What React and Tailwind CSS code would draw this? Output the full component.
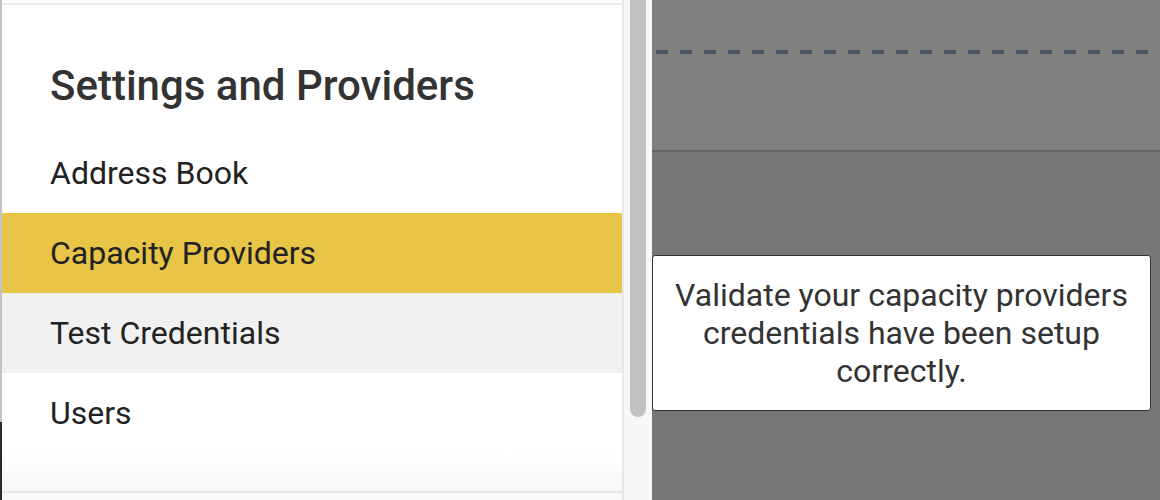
import React from "react";

export default function App() {
  const items = [
    { label: "Address Book", cls: "bg-white" },
    { label: "Capacity Providers", cls: "bg-[#e8c547]" },
    { label: "Test Credentials", cls: "bg-[#f1f1f1]" },
    { label: "Users", cls: "bg-white" },
  ];
  return (
    <div className="flex h-[500px] w-[1160px] overflow-hidden font-['Roboto',sans-serif]">
      {/* left outer edge */}
      <div className="flex w-[2px] flex-col">
        <div className="h-[422px] bg-[#c4c4c4]" />
        <div className="flex-1 bg-[#2a2a2a]" />
      </div>
      {/* panel */}
      <div className="flex w-[620px] flex-col bg-white">
        <div className="h-[3px]" />
        <div className="h-[2px] bg-[#ebebeb]" />
        <h2 className="mt-[56px] pl-[48px] text-[42px] font-medium leading-[50px] text-[#333333]">
          Settings and Providers
        </h2>
        <nav className="mt-[22px] flex flex-col">
          {items.map((it) => (
            <div
              key={it.label}
              className={`flex h-[80px] items-center pl-[48px] text-[32px] leading-[38px] text-[#222222] ${it.cls}`}
            >
              {it.label}
            </div>
          ))}
        </nav>
        <div className="flex-1 bg-gradient-to-b from-white to-[#f7f7f7]" />
        <div className="h-[2px] bg-[#e6e6e6]" />
        <div className="h-[7px] bg-[#fafafa]" />
      </div>
      {/* scrollbar */}
      <div className="flex w-[30px] border-l-2 border-[#e8e8e8] bg-[#f8f8f8] pr-[2px]">
        <div className="ml-[6px] h-[417px] w-[16px] rounded-b-[8px] bg-[#c1c1c1]" />
      </div>
      {/* backdrop */}
      <div className="flex flex-1 flex-col shadow-[inset_4px_0_4px_-2px_rgba(0,0,0,0.18)]">
        <div className="h-[150px] bg-[#808080] pt-[50px] pl-[4px] pr-[12px]">
          <div className="h-[4px] bg-[repeating-linear-gradient(to_right,#4a5562_0_12px,transparent_12px_24px)]" />
        </div>
        <div className="h-[2px] bg-[#666666]" />
        <div className="flex-1 bg-[#777777] pt-[103px]">
          <div className="w-[499px] rounded-[3px] border border-[#333333] bg-white py-5 text-center text-[32px] leading-[38px] text-[#333333]">
            Validate your capacity providers
            <br />
            credentials have been setup
            <br />
            correctly.
          </div>
        </div>
      </div>
    </div>
  );
}
